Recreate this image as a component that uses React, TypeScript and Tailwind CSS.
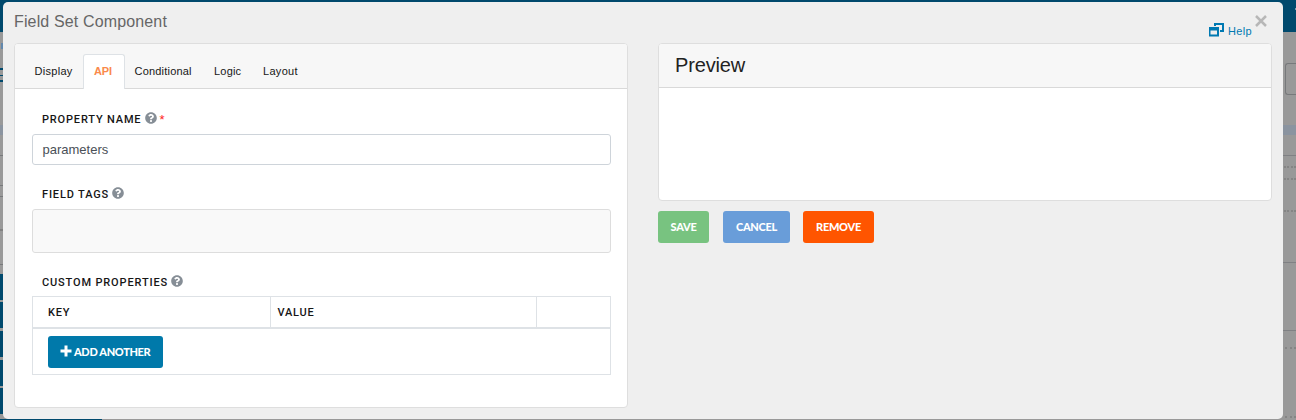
import React from "react";
import { FaQuestionCircle } from "react-icons/fa";

function Label({ text, style, required }: { text: string; style: string; required?: boolean }) {
  return (
    <div className="flex h-4 items-center pl-[10px]">
      <span className={`${style} mt-[2px] whitespace-nowrap font-[Roboto,sans-serif] text-[11px] font-medium leading-4 text-[#161616]`}>{text}</span>
      <FaQuestionCircle className="mb-[2px] size-3 text-[#868e96]" />
      {required && <span className="mt-[2px] ml-[3px] text-[13px] leading-4 text-[#f22]">*</span>}
    </div>
  );
}

const tabs = [
  { name: "Display", style: "w-[49px] pl-[0.5px] tracking-[0.3px] text-[#161616]" },
  { name: "API", style: "w-[42px] rounded-t-[3px] border border-b-0 border-[#dee2e6] bg-white pb-[2px] pl-[10px] font-bold tracking-[-0.1px] text-[#fa8a4b]" },
  { name: "Conditional", style: "w-[79px] pl-[9.5px] tracking-[0.2px] text-[#161616]" },
  { name: "Logic", style: "w-[50px] pl-[10px] tracking-[0.2px] text-[#161616]" },
  { name: "Layout", style: "w-[56px] pl-[9px] tracking-[0.3px] text-[#161616]" },
];

function Backdrop() {
  return (
    <div className="flex h-full flex-col bg-[#999]">
      <div className="flex h-8 shrink-0 justify-end bg-[#00496d]">
        <div className="mt-2 h-[2px] w-px bg-[#7c9bad]" />
      </div>
      <div className="flex min-h-0 flex-1 justify-between">
        <div className="flex w-[3px] flex-col">
          <div className="mt-[11px] ml-px h-[6px] bg-[#6288ad]" />
          <div className="mt-[19px] h-[2px] bg-[#00496d]" />
          <div className="mt-[5px] h-px bg-[#00496d]" />
          <div className="mt-[4px] h-[2px] bg-[#00496d]" />
          <div className="mt-[43px] h-[10px] bg-[#8b94a0]" />
          <div className="mt-[20px] h-px bg-[#77797b]" />
          <div className="mt-[29px] h-px bg-[#77797b]" />
          <div className="mt-[10px] h-px bg-[#77797b]" />
          <div className="mt-[32px] h-[2px] bg-[#808080]" />
          <div className="mt-[33px] h-px bg-[#77797b]" />
          <div className="mt-[9px] h-[26px] bg-[#00496d]" />
          <div className="mt-[2px] h-[26px] bg-[#00496d]" />
          <div className="mt-[3px] h-[26px] bg-[#00496d]" />
          <div className="mt-[3px] h-[26px] bg-[#00496d]" />
          <div className="mt-[2px] h-[26px] bg-[#00496d]" />
        </div>
        <div className="flex w-[13px] flex-col">
          <div className="mt-[31px] ml-[2px] h-8 rounded-l-[3px] border border-r-0 border-[#77797b]" />
          <div className="mt-[30px] h-[10px] bg-[#8b94a0]" />
          <div className="mt-[20px] h-px bg-[#808184]" />
          <div className="mt-[10px] ml-px border-t-2 border-dotted border-[#858585]" />
          <div className="mt-[10px] ml-px border-t-2 border-dotted border-[#858585]" />
          <div className="mt-[30px] ml-px border-t-2 border-dotted border-[#858585]" />
          <div className="mt-[50px] h-px bg-[#808184]" />
          <div className="mt-[67px] h-px bg-[#808184]" />
          <div className="mt-[16px] ml-[2px] border-t-2 border-dotted border-[#858585]" />
          <div className="mt-[67px] ml-[2px] border-t-2 border-dotted border-[#858585]" />
        </div>
      </div>
      <div className="h-px w-[102px] shrink-0 bg-[#00496d]" />
    </div>
  );
}

export default function App() {
  return (
    <div className="relative h-[420px] w-[1296px] overflow-hidden font-['Liberation_Sans',Arial,sans-serif]">
      <Backdrop />
      <div className="absolute top-[2px] left-[3px] flex h-[417px] w-[1280px] flex-col rounded-[5px] bg-[#efefef] px-[11px]">
        <div className="flex h-[41px] shrink-0 items-start justify-between">
          <h1 className="pt-[10px] text-[16px] leading-5 tracking-[0.14px] text-[#666]">Field Set Component</h1>
          <div className="flex pr-[5px]">
            <a className="mt-[20px] flex h-[18px] items-start text-[#0079b2]">
              <svg width="17" height="15" viewBox="0 0 17 15">
                <path fill="currentColor" d="M6 1h10v9h-4V8h2V3H8v1H6z" />
                <path fill="currentColor" fillRule="evenodd" d="M1 5h10v9.500H1zM2.500 8.500v4H9v-4z" />
              </svg>
              <span className="mt-[1px] ml-[3px] w-[27px] text-[11px] leading-4 tracking-[0.35px]">Help</span>
            </a>
            <svg className="mt-[13px]" width="12" height="12" viewBox="0 0 12 12" stroke="#b7b7b7" strokeWidth="2.5">
              <path d="M1 1l10 10M11 1L1 11" />
            </svg>
          </div>
        </div>
        <div className="flex items-start justify-between">
          <section className="h-[365px] w-[614px] overflow-hidden rounded-[4px] border border-[#dedede] bg-white">
            <nav className="flex h-[45px] items-end border-b border-[#d9d9d9] bg-[#f7f7f7] pl-[19px]">
              {tabs.map((t) => (
                <div key={t.name} className={`${t.style} relative top-px flex h-[35px] items-center whitespace-nowrap text-[11px]`}>
                  {t.name}
                </div>
              ))}
            </nav>
            <div className="flex flex-col pt-[22px] pr-[16px] pl-[17px]">
              <Label text="PROPERTY NAME" style="w-[102.5px] tracking-[0.83px]" required />
              <div className="mt-[7px] flex h-[31px] items-center rounded-[3px] border border-[#ced4da] pl-[9.5px] text-[13px] text-[#495057]">parameters</div>
              <div className="mt-[21px]"><Label text="FIELD TAGS" style="w-[70px] tracking-[0.85px]" /></div>
              <div className="mt-[7px] h-[44px] rounded-[3px] border border-[#ddd] bg-[#f9f9f9]" />
              <div className="mt-[21px]"><Label text="CUSTOM PROPERTIES" style="w-[129px] tracking-[0.85px]" /></div>
              <div className="mt-[6px] border border-[#dee2e6]">
                <div className="flex h-[32px] items-center border-b-2 border-[#dee2e6] font-[Roboto,sans-serif] text-[11px] font-medium tracking-[0.75px] text-[#161616]">
                  <div className="flex h-full w-[238px] items-center border-r border-[#dee2e6] pt-[2px] pl-[15px]">KEY</div>
                  <div className="flex h-full w-[266px] items-center border-r border-[#dee2e6] pt-[2px] pl-[6.5px]">VALUE</div>
                </div>
                <div className="h-[45px] pt-[7px] pl-[15px]">
                  <button className="flex h-8 w-[115px] items-center rounded-[3px] bg-[#0079aa] pl-[12px] text-white">
                    <svg className="mb-[2px]" width="12" height="12" viewBox="0 0 12 12" fill="none" stroke="currentColor" strokeWidth="3">
                      <path d="M6 .5v11M.5 6h11" />
                    </svg>
                    <span className="ml-[2px] whitespace-nowrap font-[Lato,sans-serif] text-[11px] font-black tracking-[-0.35px]">ADD ANOTHER</span>
                  </button>
                </div>
              </div>
            </div>
          </section>
          <section className="w-[614px]">
            <div className="h-[158px] overflow-hidden rounded-[4px] border border-[#dedede] bg-white">
              <h2 className="flex h-11 items-center border-b border-[#d9d9d9] bg-[#f7f7f7] pb-px pl-[16px] text-[20px] tracking-[-0.15px] text-[#222]">Preview</h2>
            </div>
            <div className="mt-[10px] flex font-[Lato,sans-serif] text-[11px] font-black tracking-[-0.3px] text-white">
              <button className="h-8 w-[51px] rounded-[3px] bg-[#78c380]">SAVE</button>
              <button className="ml-[14px] h-8 w-[67px] rounded-[3px] bg-[#699dd9]">CANCEL</button>
              <button className="ml-[13px] h-8 w-[71px] rounded-[3px] bg-[#ff5500]">REMOVE</button>
            </div>
          </section>
        </div>
      </div>
    </div>
  );
}
